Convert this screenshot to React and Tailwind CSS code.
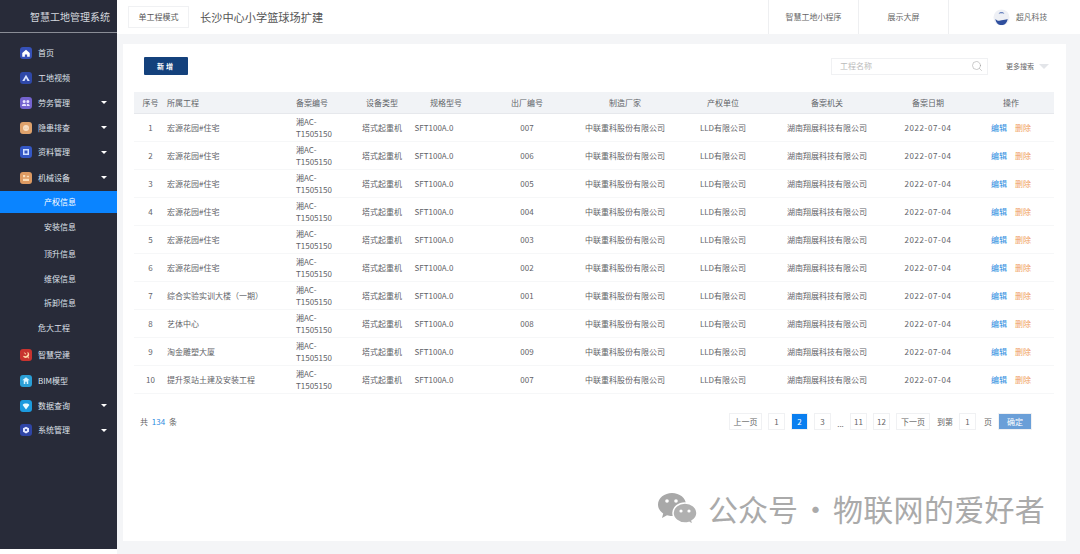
import React from "react";
import { Search } from "lucide-react";

const cols = "grid grid-cols-[33px_129px_64px_44px_60px_126px_70px_126px_82px_120px_46px_20px]";

const Caret = () => <span className="w-0 h-0 border-x-[3px] border-x-transparent border-t-[3px] border-t-white" />;

const glyphs = {
  home: <path d="M3 8 8 3.500 13 8v5H9.500v-3h-3v3H3z" fill="#fff" />,
  video: <path d="M8 3.500 13 12H3zM8 8 6 12h4z" fill="#dbe4ff" />,
  people: <path d="M5.500 4a2 2 0 1 1 0 4 2 2 0 0 1 0-4zm5 0a2 2 0 1 1 0 4 2 2 0 0 1 0-4zM2.500 12c0-2 1.500-3 3-3s3 1 3 3zm6.500-3c2 0 4 1 4 3H9.500z" fill="#e9e3ff" />,
  danger: <path d="M8 4a4 4 0 1 1 0 8 4 4 0 0 1 0-8zM6 7.500h1v1H6zm3 0h1v1H9z" fill="#f8dfc4" fillRule="evenodd" />,
  file: <path d="M4 4h8v8H4zm2 2v4h4V6z" fill="#cfe0ff" fillRule="evenodd" />,
  device: <path d="M4 4h3v3H4zm5 1h3v2H9zM4 9h8v3H4z" fill="#f9dcb8" />,
  party: <path d="M10 3.500a4.500 4.500 0 0 1 1 7l1.500 1.500-1 .5-1.500-1.500a4.500 4.500 0 0 1-6-1L5 9a3.500 3.500 0 0 0 5-4.500zM5 4l3 2-1 1.500z" fill="#ffd9a8" />,
  bim: <path d="M8 3 13 7H11v5H9V9H7v3H5V7H3z" fill="#d6f3ff" />,
  data: <path d="M3.500 6.500C5 4 11 4 12.500 6.500L8 12.500z" fill="#eafaff" />,
  gear: <path d="M8 3.500 12 5.800v4.400L8 12.500 4 10.200V5.800zM8 6.500a1.500 1.500 0 1 0 0 3 1.500 1.500 0 0 0 0-3z" fill="#e3e8ff" fillRule="evenodd" />,
};

const MenuIcon = ({ name, bg }) => (
  <span className={`w-[12px] h-[12px] rounded-[3px] shrink-0 flex items-center justify-center ${bg}`}>
    <svg viewBox="0 0 16 16" className="w-[12px] h-[12px]">{glyphs[name]}</svg>
  </span>
);

const menu = [
  { label: "首页", icon: "home", bg: "bg-[#3651b8]", h: "h-[24px]" },
  { label: "工地视频", icon: "video", bg: "bg-[#2f48a8]", h: "h-[25px]" },
  { label: "劳务管理", icon: "people", bg: "bg-[#7463cf]", h: "h-[25px]", caret: true },
  { label: "隐患排查", icon: "danger", bg: "bg-[#dfa26c]", h: "h-[25px]", caret: true },
  { label: "资料管理", icon: "file", bg: "bg-[#3457c4]", h: "h-[24px]", caret: true },
  { label: "机械设备", icon: "device", bg: "bg-[#dd9a62]", h: "h-[27px]", caret: true },
  { label: "产权信息", sub: true, active: true, h: "h-[22px]" },
  { label: "安装信息", sub: true, h: "h-[28px]" },
  { label: "顶升信息", sub: true, h: "h-[26px]" },
  { label: "维保信息", sub: true, h: "h-[24px]" },
  { label: "拆卸信息", sub: true, h: "h-[24px]" },
  { label: "危大工程", plain: true, h: "h-[26px]" },
  { label: "智慧党建", icon: "party", bg: "bg-[#c8332f]", h: "h-[28px]" },
  { label: "BIM模型", icon: "bim", bg: "bg-[#2a9fd6]", h: "h-[24px]" },
  { label: "数据查询", icon: "data", bg: "bg-[#1c9ade]", h: "h-[25px]", caret: true },
  { label: "系统管理", icon: "gear", bg: "bg-[#2f45a5]", h: "h-[24px]", caret: true },
];

const rows = [
  ["1", "宏源花园#住宅", "007"],
  ["2", "宏源花园#住宅", "006"],
  ["3", "宏源花园#住宅", "005"],
  ["4", "宏源花园#住宅", "004"],
  ["5", "宏源花园#住宅", "003"],
  ["6", "宏源花园#住宅", "002"],
  ["7", "综合实验实训大楼（一期）", "001"],
  ["8", "艺体中心", "008"],
  ["9", "淘金雕塑大厦", "009"],
  ["10", "提升泵站土建及安装工程", "007"],
];

const heads = ["出厂编号", "制造厂家", "产权单位", "备案机关", "备案日期", "操作"];

const Cell = ({ children }) => <div className="flex justify-center items-center whitespace-nowrap">{children}</div>;

const Sidebar = () => (
  <aside className="w-[117px] h-[549px] shrink-0 bg-[#282b39] text-[#dfe2ea] text-[8px]">
    <div className="h-[33px] border-b border-[#8a8d96] flex items-center justify-end pr-[7px] text-[10px] text-[#d5d8de]">
      智慧工地管理系统
    </div>
    <div className="h-[8px]" />
    {menu.map((m) => (
      <div
        key={m.label}
        className={`${m.h} flex items-center ${m.active ? "bg-[#0a84ff] text-white" : ""} ${
          m.sub ? "pl-[44px]" : m.plain ? "pl-[38px]" : "pl-[20px]"
        } ${m.caret ? "pr-[10px]" : ""}`}
      >
        {m.icon && <MenuIcon name={m.icon} bg={m.bg} />}
        <span className={m.icon ? "ml-[6px]" : ""}>{m.label}</span>
        {m.caret && <span className="ml-auto flex"><Caret /></span>}
      </div>
    ))}
  </aside>
);

const Header = () => (
  <header className="h-[34px] bg-white flex items-center shrink-0">
    <div className="ml-[11px] w-[61px] h-[22px] border border-[#f0f1f3] flex items-center justify-center text-[8px] text-[#555]">
      单工程模式
    </div>
    <div className="ml-[11px] text-[11.2px] text-[#555]">长沙中心小学篮球场扩建</div>
    <div className="ml-auto flex h-full text-[8px] text-[#666]">
      <div className="w-[90px] border-l border-[#eeeff1] flex items-center justify-center">智慧工地小程序</div>
      <div className="w-[90px] border-l border-[#eeeff1] flex items-center justify-center">展示大屏</div>
      <div className="w-[132px] border-l border-[#eeeff1] flex items-center pl-[44px]">
        <svg viewBox="0 0 18 18" className="w-[17px] h-[17px]">
          <circle cx="9" cy="9" r="8.500" fill="#eef0f5" />
          <path d="M2.500 10.500c2 2 4 2.500 6.500 1.500s4.500-.5 6.500-1.500c-.5 4-3 6.500-6.500 6.500s-6-2.500-6.500-6.500z" fill="#2f4f9e" />
          <path d="M6 5c1-2 5-2 6 0-2-.6-4-.6-6 0z" fill="#3f5fae" />
        </svg>
        <span className="ml-[6px] text-[7.800px]">超凡科技</span>
      </div>
    </div>
  </header>
);

const Table = () => (
  <div className="mx-[11px] mt-[17px] w-[920px] text-[8px] text-[#5f6368]">
    <div className={`${cols} h-[22px] items-center bg-[#f1f3f6] border-b border-[#e6e8ec]`}>
      <Cell>序号</Cell>
      <div>所属工程</div>
      <div>备案编号</div>
      <Cell>设备类型</Cell>
      <div className="flex justify-end pr-[2px] whitespace-nowrap">规格型号</div>
      {heads.map((h) => <Cell key={h}>{h}</Cell>)}
    </div>
    {rows.map(([no, name, code]) => (
      <div key={no} className={`${cols} h-[28px] items-center border-b border-[#f6f7f8]`}>
        <Cell>{no}</Cell>
        <div className="whitespace-nowrap">{name}</div>
        <div className="leading-[12px]">湘AC-<br />T1505150</div>
        <Cell>塔式起重机</Cell>
        <Cell>SFT100A.0</Cell>
        <Cell>{code}</Cell>
        <Cell>中联重科股份有限公司</Cell>
        <Cell>LLD有限公司</Cell>
        <Cell>湖南翔展科技有限公司</Cell>
        <Cell><span className="tracking-[0.6px]">2022-07-04</span></Cell>
        <Cell>
          <span className="text-[#2b8be0]">编辑</span>
          <span className="ml-[8px] text-[#f0a060]">删除</span>
        </Cell>
      </div>
    ))}
  </div>
);

const PageBtn = ({ children, w, className = "" }) => (
  <div className={`${w} h-[17px] border border-[#f0f1f3] flex items-center justify-center ${className}`}>{children}</div>
);

const Pager = () => (
  <div className="mt-[19px] mx-[11px] w-[898px] flex items-center text-[8px] text-[#666]">
    <div className="ml-[6px]">共 <span className="mx-[2px] text-[#2b8be0]">134</span> 条</div>
    <div className="ml-auto flex items-center gap-[6px]">
      <PageBtn w="w-[33px]">上一页</PageBtn>
      <PageBtn w="w-[17px]">1</PageBtn>
      <PageBtn w="w-[17px]" className="bg-[#0a7ff0] border-[#0a7ff0] text-white">2</PageBtn>
      <PageBtn w="w-[17px]">3</PageBtn>
      <span className="w-[7px] text-center self-end">...</span>
      <PageBtn w="w-[17px]">11</PageBtn>
      <PageBtn w="w-[17px]">12</PageBtn>
      <PageBtn w="w-[34px]">下一页</PageBtn>
      <span className="ml-[1px]">到第</span>
      <PageBtn w="w-[17px]">1</PageBtn>
      <span className="ml-[2px]">页</span>
      <PageBtn w="w-[34px]" className="bg-[#6a9fd8] border-[#6a9fd8] text-white">确定</PageBtn>
    </div>
  </div>
);

const Watermark = () => (
  <div className="absolute left-[657px] top-[491px] flex items-center text-[#aaaaaa] text-[30px] leading-none whitespace-nowrap">
    <svg viewBox="0 0 42 34" className="w-[42px] h-[34px]">
      <path d="M15 2C7.500 2 1 7 1 13.500c0 3.700 2 6.800 5.200 9L5 27l5-2.700c1.500.4 3 .7 5 .7 7.500 0 14-5 14-11.500S22.500 2 15 2z" fill="#a8a8a8" />
      <path d="M28 12c-6.600 0-12 4.500-12 10s5.400 10 12 10c1.400 0 2.700-.2 4-.6l4 2.200-1-3.700c3-2 5-4.700 5-7.900 0-5.500-5.400-10-12-10z" fill="#b0b0b0" stroke="#fff" strokeWidth="1.500" />
      <circle cx="10" cy="10" r="1.800" fill="#fff" />
      <circle cx="19" cy="10" r="1.800" fill="#fff" />
      <circle cx="24" cy="20" r="1.600" fill="#fff" />
      <circle cx="32" cy="20" r="1.600" fill="#fff" />
    </svg>
    <span className="ml-[9px]">公众号</span>
    <span className="w-[35px] text-center">·</span>
    <span className="tracking-[0.3px]">物联网的爱好者</span>
  </div>
);

export default function App() {
  return (
    <div className="relative w-[1080px] h-[554px] flex overflow-hidden bg-white font-['Noto_Sans_CJK_SC','Noto_Sans',sans-serif]">
      <Sidebar />
      <main className="flex-1 flex flex-col min-w-0">
        <Header />
        <div className="flex-1 bg-[#f4f5f7] pt-[10px] pl-[6px] pr-[14px] pb-[13px]">
          <div className="h-full bg-white">
            <div className="flex items-center pt-[13px]">
              <button className="ml-[21px] w-[44px] h-[18px] bg-[#14417c] text-white text-[7px] font-bold tracking-[2px] rounded-[1px]">
                新增
              </button>
              <div className="ml-auto w-[157px] h-[17px] border border-[#f0f1f3] flex items-center pl-[8px] pr-[4px] text-[8px] text-[#bbbbbb]">
                工程名称
                <Search className="ml-auto w-[12px] h-[12px] text-[#999]" strokeWidth={1} />
              </div>
              <span className="ml-[18px] text-[7px] text-[#666]">更多搜索</span>
              <span className="ml-[5px] mr-[17px] w-0 h-0 border-x-[5px] border-x-transparent border-t-[5px] border-t-[#e3e5e9]" />
            </div>
            <Table />
            <Pager />
          </div>
        </div>
      </main>
      <Watermark />
    </div>
  );
}
